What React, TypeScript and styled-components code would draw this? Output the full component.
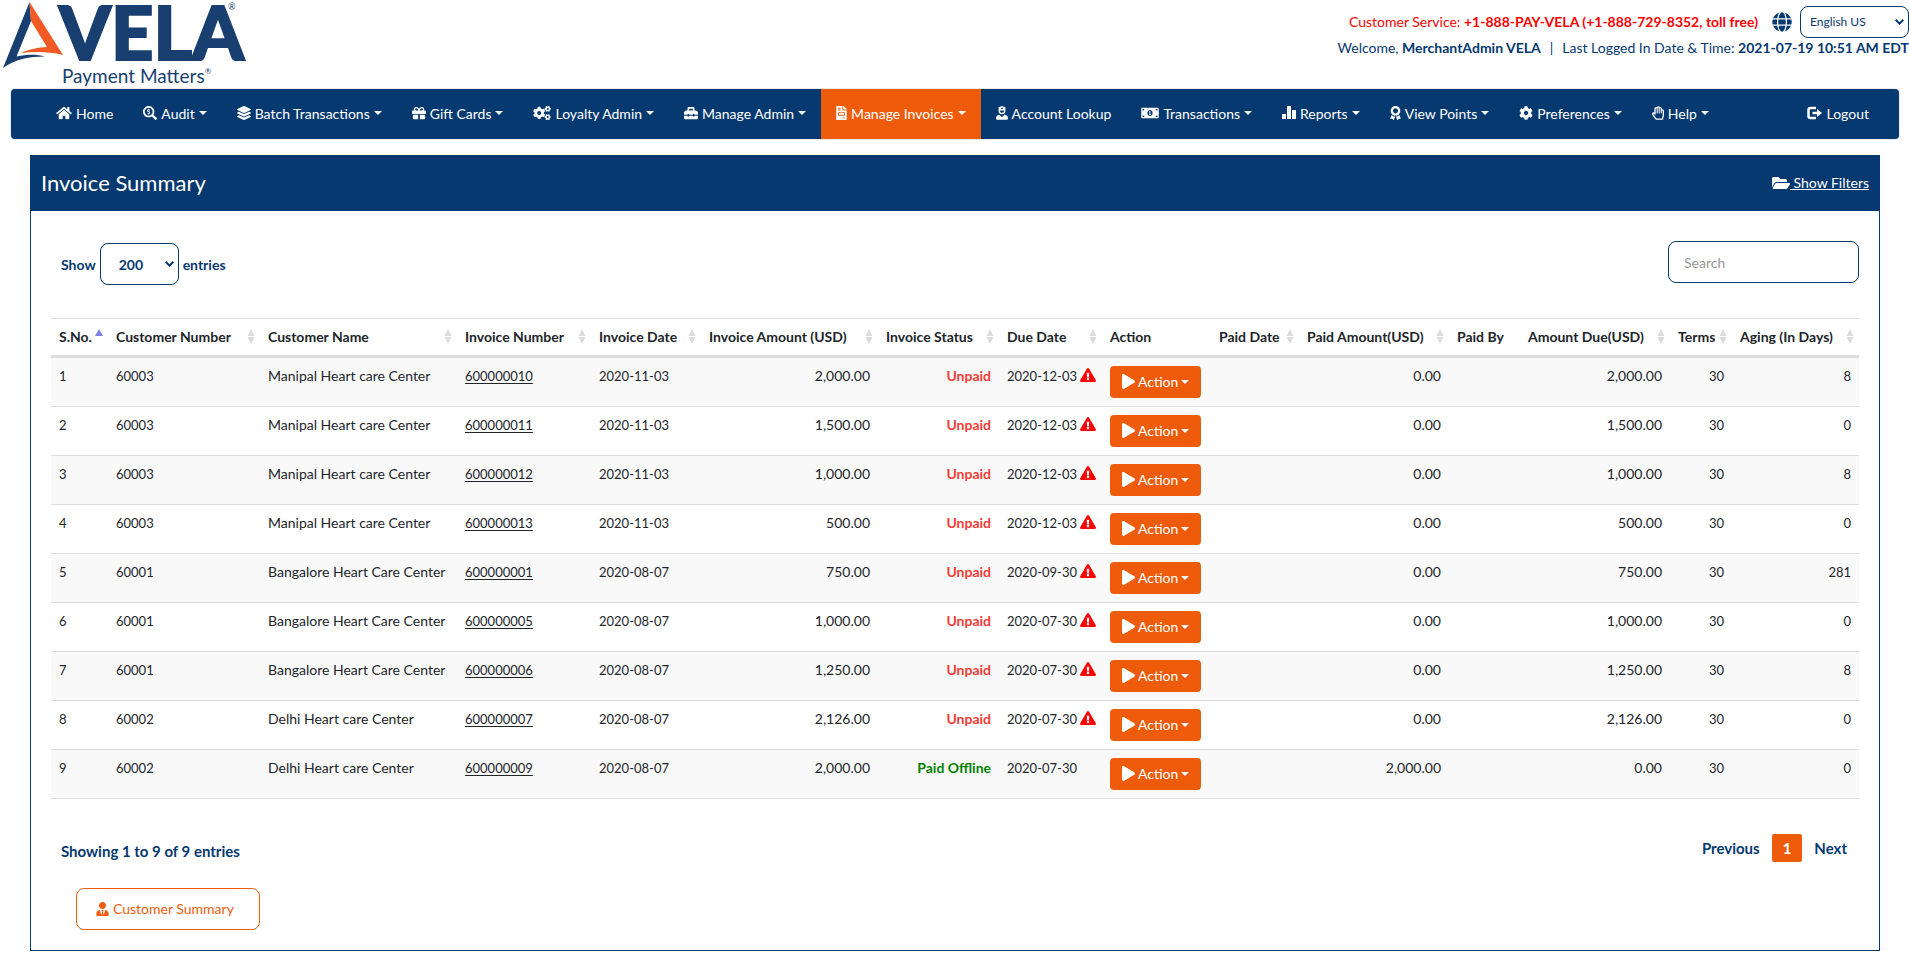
import React from 'react';
import styled, { createGlobalStyle } from 'styled-components';
import type { IconType } from 'react-icons';
import {
  FaAward,
  FaCog,
  FaCogs,
  FaExclamationTriangle,
  FaFileInvoice,
  FaFolderOpen,
  FaGift,
  FaGlobe,
  FaHome,
  FaLayerGroup,
  FaMoneyBillAlt,
  FaPlay,
  FaRegHandPaper,
  FaSearchDollar,
  FaToolbox,
  FaUserNurse,
  FaUserTie,
} from 'react-icons/fa';

const NAVY = '#063970';
const ORANGE = '#ee5c0b';

const GlobalStyle = createGlobalStyle`
  * { box-sizing: border-box; }
  body {
    margin: 0;
    background: #fff;
    color: #212529;
    font-family: 'Trebuchet MS', Lato, sans-serif;
    font-size: 14px;
    line-height: 21px;
  }
  button, input, select { font: inherit; }
`;

/* Icons are not square: each is given its own width. */
const Glyph = styled.span<{ $w: number; $h?: number }>`
  display: inline-flex;
  flex: none;
  && svg {
    width: ${(p) => p.$w}px;
    height: ${(p) => p.$h ?? 14}px;
  }
`;

/* ---------- Page header ---------- */

const Header = styled.header`
  display: flex;
  justify-content: space-between;
  align-items: flex-start;
  height: 89px;
`;

const Brand = styled.a`
  display: flex;
  padding-left: 3px;
  color: #193f70;
  text-decoration: none;
`;

const BrandMark = styled.svg`
  width: 61px;
  height: 68px;
  padding-top: 2px;
`;

const BrandText = styled.div`
  display: flex;
  flex-direction: column;
  margin-left: -5px;
`;

const BrandName = styled.span`
  display: flex;
  align-items: flex-start;
  height: 64px;
  font-size: 74px;
  font-weight: 900;
  line-height: 63px;
  -webkit-text-stroke: 2px currentColor;
  sup {
    margin-left: -16px;
    font-size: 9px;
    font-weight: 400;
    line-height: 14px;
    -webkit-text-stroke: 0;
  }
`;

const Tagline = styled.span`
  display: flex;
  padding-left: 3px;
  font-size: 19px;
  line-height: 24px;
  sup { font-size: 8px; line-height: 14px; }
`;

const HeaderInfo = styled.div`
  display: flex;
  flex-direction: column;
  align-items: flex-end;
  padding-top: 6px;
`;

const InfoRow = styled.div<{ $alert?: boolean }>`
  display: flex;
  align-items: center;
  color: ${(p) => (p.$alert ? '#f00' : NAVY)};
  line-height: 20px;
  white-space: pre;
`;

const Divider = styled.span`
  padding: 0 9px;
`;

const GlobeGlyph = styled(Glyph)`
  margin: 0 8px 0 14px;
  color: ${NAVY};
`;

const SelectBox = styled.span<{ $w: number; $h: number }>`
  position: relative;
  display: inline-flex;
  width: ${(p) => p.$w}px;
  height: ${(p) => p.$h}px;
  color: ${NAVY};
`;

const Select = styled.select<{ $compact?: boolean }>`
  appearance: none;
  width: 100%;
  padding: ${(p) => (p.$compact ? '0 20px 0 9px' : '0 20px 0 18px')};
  border: 1px solid ${NAVY};
  border-radius: 8px;
  background: #fff;
  color: ${NAVY};
  font-size: ${(p) => (p.$compact ? 12 : 14)}px;
  font-weight: ${(p) => (p.$compact ? 400 : 700)};
`;

const SelectArrow = styled.svg`
  position: absolute;
  top: 50%;
  right: 5px;
  width: 9px;
  height: 6px;
  margin-top: -3px;
  pointer-events: none;
`;

/* ---------- Navigation ---------- */

const Nav = styled.nav`
  display: flex;
  justify-content: space-between;
  margin: 0 10px 0 11px;
  padding: 0 15px 0 30px;
  border-radius: 4px;
  background: ${NAVY};
  box-shadow: 0 0 2px rgba(0, 0, 0, 0.3);
`;

const NavList = styled.ul`
  display: flex;
  margin: 0;
  padding: 0;
  list-style: none;
`;

const NavItem = styled.li<{ $active?: boolean }>`
  display: flex;
  background: ${(p) => (p.$active ? ORANGE : 'transparent')};

  a, button {
    display: flex;
    align-items: center;
    gap: 4px;
    height: 50px;
    padding: 0 15px 2px;
    border: 0;
    background: none;
    color: #fff;
    text-decoration: none;
    white-space: nowrap;
    cursor: pointer;
  }
`;

const Caret = styled.span`
  border: 4px solid transparent;
  border-top-color: currentColor;
  border-bottom: 0;
`;

/* ---------- Panel ---------- */

const Panel = styled.main`
  margin: 16px 29px 0 30px;
  border: 1px solid ${NAVY};
  box-shadow: 0 8px 16px rgba(0, 0, 0, 0.04);
`;

const PanelHeader = styled.div`
  display: flex;
  justify-content: space-between;
  align-items: center;
  height: 55px;
  padding: 0 10px 2px;
  background: ${NAVY};
  color: #fff;

  h1 { margin: 0; font-size: 22px; font-weight: 400; line-height: 28px; }
  a { display: flex; align-items: center; color: #fff; white-space: pre; }
`;

const PanelBody = styled.div`
  padding: 30px 20px 20px;
`;

const TableBar = styled.div`
  display: flex;
  justify-content: space-between;
  align-items: flex-start;
  padding-left: 10px;
`;

const EntriesLabel = styled.label`
  display: flex;
  align-items: center;
  gap: 4px;
  padding-top: 2px;
  color: ${NAVY};
  font-weight: 700;
`;

const SearchInput = styled.input`
  width: 191px;
  height: 42px;
  padding: 0 15px;
  border: 1px solid ${NAVY};
  border-radius: 8px;
  &::placeholder { color: #999; opacity: 1; }
`;

const Table = styled.table`
  width: 100%;
  margin-top: 33px;
  border-collapse: separate;
  border-spacing: 0;
  border-top: 1px solid #ddd;
  table-layout: fixed;

  th {
    padding: 0 5px 0 8px;
    border-bottom: 3px solid #ddd;
    font-weight: 700;
    text-align: left;
    white-space: nowrap;
  }
  tbody tr:nth-child(odd) { background: #f9f9f9; }
`;

const HeadLabel = styled.span`
  display: flex;
  justify-content: space-between;
  align-items: center;
  height: 36px;
  padding-bottom: 1px;
`;

const SortIcon = styled.svg`
  flex: none;
  width: 8px;
  height: 15px;
`;

const Cell = styled.td<{ $right?: boolean; $code?: boolean }>`
  padding: 7px 8px 8px;
  border-bottom: 1px solid #ddd;
  font-size: ${(p) => (p.$code ? 13 : 14)}px;
  line-height: ${(p) => (p.$code ? 23 : 21)}px;
  text-align: ${(p) => (p.$right ? 'right' : 'left')};
  vertical-align: top;
  white-space: nowrap;
  a { color: inherit; text-underline-offset: 2px; }
`;

const Status = styled.span<{ $paid: boolean }>`
  color: ${(p) => (p.$paid ? '#008000' : '#f53b36')};
  font-weight: 700;
`;

const DueDate = styled.span`
  display: flex;
  align-items: center;
  gap: 3px;
  svg { color: #f00; margin-top: -3px; }
`;

const ActionButton = styled.button`
  display: flex;
  align-items: center;
  gap: 3px;
  height: 32px;
  margin-top: 1px;
  padding: 0 12px 1px;
  border: 0;
  border-radius: 4px;
  background: ${ORANGE};
  color: #fff;
`;

const TableFooter = styled.div`
  display: flex;
  justify-content: space-between;
  align-items: flex-end;
  margin-top: 35px;
  padding-left: 10px;
  color: ${NAVY};
  font-size: 15px;
  font-weight: 700;
`;

const Pager = styled.nav`
  display: flex;
`;

const PageButton = styled.button<{ $current?: boolean }>`
  height: 28px;
  padding: 0 ${(p) => (p.$current ? 11 : 12)}px;
  border: 0;
  border-radius: 2px;
  background: ${(p) => (p.$current ? ORANGE : 'transparent')};
  color: ${(p) => (p.$current ? '#fff' : NAVY)};
`;

const SummaryButton = styled.button`
  display: flex;
  align-items: center;
  gap: 4px;
  width: 184px;
  height: 42px;
  margin: 26px 0 0 25px;
  padding: 0 19px 1px;
  border: 1px solid ${ORANGE};
  border-radius: 8px;
  background: #fff;
  color: ${ORANGE};
`;

/* ---------- Data ---------- */

const BarsIcon: IconType = () => (
  <svg viewBox="0 0 14 14" fill="currentColor">
    <path d="M0 8h4v5H0zM5 0h4v13H5zM10 4h4v9H10z" />
  </svg>
);

const SignOutIcon: IconType = () => (
  <svg viewBox="0 0 15 14" fill="none" stroke="currentColor" strokeWidth="2.5">
    <path d="M9 2H3.500Q1.500 2 1.500 4v6Q1.500 12 3.500 12H9M5.500 7H11" />
    <path d="M10 3v8l5-4z" fill="currentColor" stroke="none" />
  </svg>
);

type MenuEntry = {
  label: string;
  icon: IconType;
  iconWidth: number;
  menu?: boolean;
  active?: boolean;
};

const menuEntries: MenuEntry[] = [
  { label: 'Home', icon: FaHome, iconWidth: 16 },
  { label: 'Audit', icon: FaSearchDollar, iconWidth: 14, menu: true },
  { label: 'Batch Transactions', icon: FaLayerGroup, iconWidth: 14, menu: true },
  { label: 'Gift Cards', icon: FaGift, iconWidth: 14, menu: true },
  { label: 'Loyalty Admin', icon: FaCogs, iconWidth: 18, menu: true },
  { label: 'Manage Admin', icon: FaToolbox, iconWidth: 14, menu: true },
  { label: 'Manage Invoices', icon: FaFileInvoice, iconWidth: 11, menu: true, active: true },
  { label: 'Account Lookup', icon: FaUserNurse, iconWidth: 12 },
  { label: 'Transactions', icon: FaMoneyBillAlt, iconWidth: 18, menu: true },
  { label: 'Reports', icon: BarsIcon, iconWidth: 14, menu: true },
  { label: 'View Points', icon: FaAward, iconWidth: 11, menu: true },
  { label: 'Preferences', icon: FaCog, iconWidth: 14, menu: true },
  { label: 'Help', icon: FaRegHandPaper, iconWidth: 12, menu: true },
];

type Column = { label: string; width: number; sort?: 'asc' | 'both' };

const columns: Column[] = [
  { label: 'S.No.', width: 57, sort: 'asc' },
  { label: 'Customer Number', width: 152, sort: 'both' },
  { label: 'Customer Name', width: 197, sort: 'both' },
  { label: 'Invoice Number', width: 134, sort: 'both' },
  { label: 'Invoice Date', width: 110, sort: 'both' },
  { label: 'Invoice Amount (USD)', width: 177, sort: 'both' },
  { label: 'Invoice Status', width: 121, sort: 'both' },
  { label: 'Due Date', width: 103, sort: 'both' },
  { label: 'Action', width: 109 },
  { label: 'Paid Date', width: 88, sort: 'both' },
  { label: 'Paid Amount(USD)', width: 150, sort: 'both' },
  { label: 'Paid By', width: 71 },
  { label: 'Amount Due(USD)', width: 150, sort: 'both' },
  { label: 'Terms', width: 62, sort: 'both' },
  { label: 'Aging (In Days)', width: 127, sort: 'both' },
];

const invoices = [
  { customer: '60003', name: 'Manipal Heart care Center', number: '600000010', date: '2020-11-03', amount: '2,000.00', status: 'Unpaid', due: '2020-12-03', paid: '0.00', owed: '2,000.00', aging: 8 },
  { customer: '60003', name: 'Manipal Heart care Center', number: '600000011', date: '2020-11-03', amount: '1,500.00', status: 'Unpaid', due: '2020-12-03', paid: '0.00', owed: '1,500.00', aging: 0 },
  { customer: '60003', name: 'Manipal Heart care Center', number: '600000012', date: '2020-11-03', amount: '1,000.00', status: 'Unpaid', due: '2020-12-03', paid: '0.00', owed: '1,000.00', aging: 8 },
  { customer: '60003', name: 'Manipal Heart care Center', number: '600000013', date: '2020-11-03', amount: '500.00', status: 'Unpaid', due: '2020-12-03', paid: '0.00', owed: '500.00', aging: 0 },
  { customer: '60001', name: 'Bangalore Heart Care Center', number: '600000001', date: '2020-08-07', amount: '750.00', status: 'Unpaid', due: '2020-09-30', paid: '0.00', owed: '750.00', aging: 281 },
  { customer: '60001', name: 'Bangalore Heart Care Center', number: '600000005', date: '2020-08-07', amount: '1,000.00', status: 'Unpaid', due: '2020-07-30', paid: '0.00', owed: '1,000.00', aging: 0 },
  { customer: '60001', name: 'Bangalore Heart Care Center', number: '600000006', date: '2020-08-07', amount: '1,250.00', status: 'Unpaid', due: '2020-07-30', paid: '0.00', owed: '1,250.00', aging: 8 },
  { customer: '60002', name: 'Delhi Heart care Center', number: '600000007', date: '2020-08-07', amount: '2,126.00', status: 'Unpaid', due: '2020-07-30', paid: '0.00', owed: '2,126.00', aging: 0 },
  { customer: '60002', name: 'Delhi Heart care Center', number: '600000009', date: '2020-08-07', amount: '2,000.00', status: 'Paid Offline', due: '2020-07-30', paid: '2,000.00', owed: '0.00', aging: 0 },
];

/* ---------- Parts ---------- */

const Chevron = () => (
  <SelectArrow viewBox="0 0 9 6" fill="none" stroke="currentColor" strokeWidth="2">
    <path d="M0.7 0.8 4.5 4.6 8.3 0.8" />
  </SelectArrow>
);

const Sorter = ({ kind }: { kind: 'asc' | 'both' }) => (
  <SortIcon viewBox="0 0 8 15">
    {kind === 'asc' ? (
      <path d="M4 0 8 7H0z" fill="#8080e0" />
    ) : (
      <path d="M4 0 7.5 7h-7zM4 15 .5 8h7z" fill="#dcdcdc" />
    )}
  </SortIcon>
);

const MenuItem = ({ label, icon: Icon, iconWidth, menu, active }: MenuEntry) => {
  const content = (
    <>
      <Glyph $w={iconWidth}>
        <Icon />
      </Glyph>
      {label}
      {menu && <Caret />}
    </>
  );
  return (
    <NavItem $active={active}>
      {menu ? (
        <button type="button" aria-haspopup="menu">
          {content}
        </button>
      ) : (
        <a href="#">{content}</a>
      )}
    </NavItem>
  );
};

export default function App() {
  return (
    <>
      <GlobalStyle />
      <Header>
        <Brand href="#">
          <BrandMark viewBox="0 0 61 66">
            <path
              fill="#193f70"
              d="M26.5 0 28 19 13.5 54.500C24 52 34 52 42 54.500C26 54.500 12 57 0 66z"
            />
            <path
              fill="#f15a24"
              d="M26.500 0 60 53C46 49.500 32 49.500 18 51C26 47 36 45.500 44 45L28 19z"
            />
          </BrandMark>
          <BrandText>
            <BrandName>
              VELA<sup>®</sup>
            </BrandName>
            <Tagline>
              Payment Matters<sup>®</sup>
            </Tagline>
          </BrandText>
        </Brand>
        <HeaderInfo>
          <InfoRow $alert>
            {'Customer Service: '}
            <b>+1-888-PAY-VELA (+1-888-729-8352, toll free)</b>
            <GlobeGlyph $w={20} $h={20}>
              <FaGlobe />
            </GlobeGlyph>
            <SelectBox $w={109} $h={32}>
              <Select $compact aria-label="Language" defaultValue="English US">
                <option>English US</option>
              </Select>
              <Chevron />
            </SelectBox>
          </InfoRow>
          <InfoRow>
            {'Welcome, '}
            <b>MerchantAdmin VELA</b>
            <Divider>|</Divider>
            {'Last Logged In Date & Time: '}
            <b>2021-07-19 10:51 AM EDT</b>
          </InfoRow>
        </HeaderInfo>
      </Header>

      <Nav>
        <NavList>
          {menuEntries.map((entry) => (
            <MenuItem key={entry.label} {...entry} />
          ))}
        </NavList>
        <NavList>
          <MenuItem label="Logout" icon={SignOutIcon} iconWidth={15} />
        </NavList>
      </Nav>

      <Panel>
        <PanelHeader>
          <h1>Invoice Summary</h1>
          <a href="#">
            <Glyph $w={18} $h={16}>
              <FaFolderOpen />
            </Glyph>
            {' Show Filters'}
          </a>
        </PanelHeader>
        <PanelBody>
          <TableBar>
            <EntriesLabel>
              Show
              <SelectBox $w={79} $h={42}>
                <Select defaultValue="200">
                  <option>200</option>
                </Select>
                <Chevron />
              </SelectBox>
              entries
            </EntriesLabel>
            <SearchInput type="search" placeholder="Search" aria-label="Search" />
          </TableBar>

          <Table>
            <colgroup>
              {columns.map((c) => (
                <col key={c.label} width={c.width} />
              ))}
            </colgroup>
            <thead>
              <tr>
                {columns.map((c) => (
                  <th key={c.label} scope="col">
                    <HeadLabel>
                      {c.label}
                      {c.sort && <Sorter kind={c.sort} />}
                    </HeadLabel>
                  </th>
                ))}
              </tr>
            </thead>
            <tbody>
              {invoices.map((row, i) => (
                <tr key={row.number}>
                  <Cell $code>{i + 1}</Cell>
                  <Cell $code>{row.customer}</Cell>
                  <Cell>{row.name}</Cell>
                  <Cell $code>
                    <a href="#">{row.number}</a>
                  </Cell>
                  <Cell $code>{row.date}</Cell>
                  <Cell $right>{row.amount}</Cell>
                  <Cell $right>
                    <Status $paid={row.status !== 'Unpaid'}>{row.status}</Status>
                  </Cell>
                  <Cell $code>
                    <DueDate>
                      {row.due}
                      {row.status === 'Unpaid' && (
                        <Glyph $w={16}>
                          <FaExclamationTriangle />
                        </Glyph>
                      )}
                    </DueDate>
                  </Cell>
                  <Cell>
                    <ActionButton type="button" aria-haspopup="menu">
                      <Glyph $w={13} $h={15}>
                        <FaPlay />
                      </Glyph>
                      Action
                      <Caret />
                    </ActionButton>
                  </Cell>
                  <Cell />
                  <Cell $right>{row.paid}</Cell>
                  <Cell />
                  <Cell $right>{row.owed}</Cell>
                  <Cell $right $code>
                    30
                  </Cell>
                  <Cell $right $code>
                    {row.aging}
                  </Cell>
                </tr>
              ))}
            </tbody>
          </Table>

          <TableFooter>
            <span>Showing 1 to 9 of 9 entries</span>
            <Pager aria-label="Pages">
              <PageButton type="button">Previous</PageButton>
              <PageButton type="button" $current>
                1
              </PageButton>
              <PageButton type="button">Next</PageButton>
            </Pager>
          </TableFooter>
          <SummaryButton type="button">
            <Glyph $w={13}>
              <FaUserTie />
            </Glyph>
            Customer Summary
          </SummaryButton>
        </PanelBody>
      </Panel>
    </>
  );
}
